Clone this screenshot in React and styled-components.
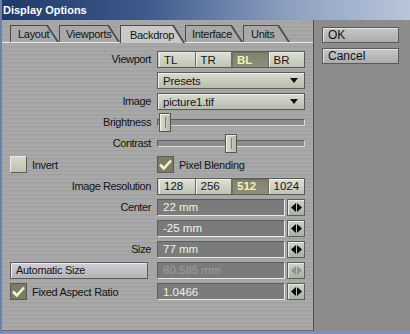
import styled, { createGlobalStyle } from "styled-components";

const GlobalStyle = createGlobalStyle`
  body { margin: 0; background: #8d8d8d; }
  * { box-sizing: border-box; }
`;

const Window = styled.div`
  width: 410px;
  height: 334px;
  display: flex;
  flex-direction: column;
  background: #8d8d8d;
  border-left: 2px solid #7180a6;
  border-bottom: 3px solid #8090b6;
  font-family: "Liberation Sans", Arial, sans-serif;
  overflow: hidden;
`;

const TitleBar = styled.div`
  height: 20px;
  flex: none;
  display: flex;
  align-items: center;
  padding-left: 1px;
  background: linear-gradient(90deg, #1f3968 0%, #3e5a8a 35%, #8d9fc0 70%, #b9c5da 100%);
  color: #ffffff;
  font-weight: bold;
  font-size: 11px;
`;

const Body = styled.div`
  flex: 1;
  display: flex;
  min-height: 0;
`;

const Main = styled.div`
  width: 312px;
  display: flex;
  flex-direction: column;
  background-color: #a6a6a6;
  background-image: repeating-linear-gradient(0deg, rgba(255,255,255,0.06) 0 1px, transparent 1px 3px, rgba(0,0,0,0.04) 3px 4px);
  border-right: 1px solid #4f4f4f;
  border-bottom: 1px solid #6a6a6a;
`;

const TabStrip = styled.div`
  height: 23px;
  display: flex;
  align-items: flex-end;
  padding-left: 8px;
  border-bottom: 1px solid #e6e6e6;
`;

const TabOuter = styled.div`
  width: ${p => p.$w}px;
  height: ${p => (p.$active ? 18 : 17)}px;
  margin-bottom: ${p => (p.$active ? -1 : 0)}px;
  padding: 1px 1px 0 1px;
  background: #4a4a4a;
  clip-path: polygon(0 0, calc(100% - 11px) 0, 100% 100%, 0 100%);
  position: relative;
  z-index: ${p => (p.$active ? 2 : 1)};
`;

const TabInner = styled.div`
  height: 100%;
  display: flex;
  align-items: center;
  padding-left: ${p => p.$pad}px;
  font-size: 11px;
  letter-spacing: -0.3px;
  color: #141414;
  background: ${p => (p.$active ? "#c9c9c9" : "#a9a9a9")};
  clip-path: polygon(0 0, calc(100% - 11.5px) 0, calc(100% - 1px) 100%, 0 100%);
`;

const Grid = styled.div`
  display: grid;
  grid-template-columns: 142px 148px;
  grid-auto-rows: 17px;
  column-gap: 5px;
  row-gap: 4.1px;
  padding: 8px 0 0 8px;
`;

const Label = styled.div`
  text-align: right;
  font-size: 11px;
  letter-spacing: -0.4px;
  line-height: 17px;
  color: #141414;
  padding-right: 1px;
`;

const Segmented = styled.div`
  display: grid;
  grid-template-columns: repeat(4, 1fr);
  border: 1px solid #5b5d55;
`;

const Segment = styled.div`
  display: flex;
  align-items: center;
  padding-left: 5px;
  font-size: 11.5px;
  font-weight: ${p => (p.$on ? "bold" : "normal")};
  color: ${p => (p.$on ? "#f3f3b6" : "#161616")};
  background: ${p => (p.$on ? "linear-gradient(#7f816c, #8d8f79)" : "linear-gradient(#dfe1d7, #bfc2b5)")};
  border-left: 1px solid ${p => (p.$first ? "transparent" : "#6b6d64")};
  box-shadow: inset 1px 1px 0 ${p => (p.$on ? "#6e7060" : "#eeefe8")};
`;

const Dropdown = styled.div`
  display: flex;
  align-items: center;
  justify-content: space-between;
  padding: 0 6px 0 5px;
  font-size: 11.5px;
  letter-spacing: -0.2px;
  color: #161616;
  background: linear-gradient(#d8dbd0, #b8bcae);
  border: 1px solid #5b5d55;
  box-shadow: inset 1px 1px 0 #eeefe8;
`;

const Caret = styled.span`
  width: 0;
  height: 0;
  border-left: 4px solid transparent;
  border-right: 4px solid transparent;
  border-top: 5px solid #111;
`;

const SliderBox = styled.div`
  position: relative;
  display: flex;
  align-items: center;
`;

const Track = styled.div`
  width: 100%;
  height: 7px;
  background: #8c8c8c;
  border-top: 1px solid #5e5e5e;
  border-left: 1px solid #5e5e5e;
  border-bottom: 1px solid #d9d9d9;
  border-right: 1px solid #d9d9d9;
`;

const Thumb = styled.div`
  position: absolute;
  top: -1px;
  left: ${p => p.$x}px;
  width: 12px;
  height: 19px;
  background: linear-gradient(90deg, #d9dcd2, #b5b9ab);
  border: 1px solid #55574f;
  box-shadow: inset 1px 1px 0 #f0f0ea;
  &::after {
    content: "";
    position: absolute;
    left: 5px;
    top: 3px;
    width: 1px;
    height: 11px;
    background: #7c7e74;
  }
`;

const CheckRow = styled.div`
  display: flex;
  align-items: center;
  gap: 5px;
  font-size: 11px;
  letter-spacing: -0.3px;
  color: #141414;
`;

const Box = styled.div`
  width: 17px;
  height: 17px;
  flex: none;
  display: flex;
  align-items: center;
  justify-content: center;
  background: ${p => (p.$on ? "#7a7c66" : "linear-gradient(#d6d8cc, #bec1b3)")};
  border-top: 1px solid ${p => (p.$on ? "#5b5c4d" : "#eceee6")};
  border-left: 1px solid ${p => (p.$on ? "#5b5c4d" : "#eceee6")};
  border-bottom: 1px solid #5a5a54;
  border-right: 1px solid #5a5a54;
`;

const ValueRow = styled.div`
  display: flex;
  gap: 2px;
`;

const Field = styled.div`
  width: 128px;
  display: flex;
  align-items: center;
  padding-left: 5px;
  font-size: 11.5px;
  color: ${p => (p.$off ? "#9d9d9d" : "#f1f1e4")};
  background: #7b7b7b;
  border-top: 1px solid #5c5c5c;
  border-left: 1px solid #5c5c5c;
  border-bottom: 1px solid #e9e9e9;
  border-right: 1px solid #e9e9e9;
`;

const Spin = styled.div`
  width: 18px;
  display: flex;
  align-items: center;
  justify-content: center;
  background: linear-gradient(#cfd4c8, #aab1a5);
  border: 1px solid #5c6058;
  box-shadow: inset 1px 1px 0 #e8ece2;
`;

const WideButton = styled.div`
  width: 138px;
  display: flex;
  align-items: center;
  padding-left: 5px;
  font-size: 11px;
  letter-spacing: -0.3px;
  color: #141414;
  background: linear-gradient(#cfcfd3, #b3b3b8);
  border: 1px solid #5b5b60;
  box-shadow: inset 1px 1px 0 #ececf0;
`;

const Side = styled.div`
  flex: 1;
  display: flex;
  flex-direction: column;
  gap: 5px;
  padding: 7px 0 0 8px;
  background: #8c8c8c;
`;

const SideButton = styled.div`
  width: 77px;
  height: 16px;
  display: flex;
  align-items: center;
  padding-left: 5px;
  font-size: 12px;
  color: #111;
  background: linear-gradient(#c8c8c8, #acacac);
  border: 1px solid #5a5a5a;
  box-shadow: inset 1px 1px 0 #e4e4e4;
`;

function Arrows({ off }) {
  const c = off ? "#8e948a" : "#0d0d0d";
  return (
    <svg width="11" height="9" viewBox="0 0 11 9">
      <polygon points="0,4.5 5,0 5,9" fill={c} />
      <polygon points="6,0 11,4.5 6,9" fill={c} />
    </svg>
  );
}

function Check() {
  return (
    <svg width="13" height="11" viewBox="0 0 13 11">
      <path d="M1 5.5 L4.8 9.5 L12 1.5" stroke="#f5f3cf" strokeWidth="2.6" fill="none" />
    </svg>
  );
}

const tabs = [
  { name: "Layout", w: 49, pad: 7 },
  { name: "Viewports", w: 61, pad: 6 },
  { name: "Backdrop", w: 65, pad: 9, active: true },
  { name: "Interface", w: 58, pad: 6 },
  { name: "Units", w: 47, pad: 7 },
];

function Value({ text, off }) {
  return (
    <ValueRow>
      <Field $off={off}>{text}</Field>
      <Spin><Arrows off={off} /></Spin>
    </ValueRow>
  );
}

export default function App() {
  return (
    <>
      <GlobalStyle />
      <Window>
        <TitleBar>Display Options</TitleBar>
        <Body>
          <Main>
            <TabStrip>
              {tabs.map(t => (
                <TabOuter key={t.name} $w={t.w} $active={t.active}>
                  <TabInner $active={t.active} $pad={t.pad}>{t.name}</TabInner>
                </TabOuter>
              ))}
            </TabStrip>
            <Grid>
              <Label>Viewport</Label>
              <Segmented>
                <Segment $first>TL</Segment>
                <Segment>TR</Segment>
                <Segment $on>BL</Segment>
                <Segment>BR</Segment>
              </Segmented>

              <div />
              <Dropdown>Presets<Caret /></Dropdown>

              <Label>Image</Label>
              <Dropdown>picture1.tif<Caret /></Dropdown>

              <Label>Brightness</Label>
              <SliderBox><Track /><Thumb $x={2} /></SliderBox>

              <Label>Contrast</Label>
              <SliderBox><Track /><Thumb $x={68} /></SliderBox>

              <CheckRow><Box />Invert</CheckRow>
              <CheckRow><Box $on><Check /></Box>Pixel Blending</CheckRow>

              <Label>Image Resolution</Label>
              <Segmented>
                <Segment $first>128</Segment>
                <Segment>256</Segment>
                <Segment $on>512</Segment>
                <Segment>1024</Segment>
              </Segmented>

              <Label>Center</Label>
              <Value text="22 mm" />

              <div />
              <Value text="-25 mm" />

              <Label>Size</Label>
              <Value text="77 mm" />

              <WideButton>Automatic Size</WideButton>
              <Value text="80.585 mm" off />

              <CheckRow><Box $on><Check /></Box>Fixed Aspect Ratio</CheckRow>
              <Value text="1.0466" />
            </Grid>
          </Main>
          <Side>
            <SideButton>OK</SideButton>
            <SideButton>Cancel</SideButton>
          </Side>
        </Body>
      </Window>
    </>
  );
}
